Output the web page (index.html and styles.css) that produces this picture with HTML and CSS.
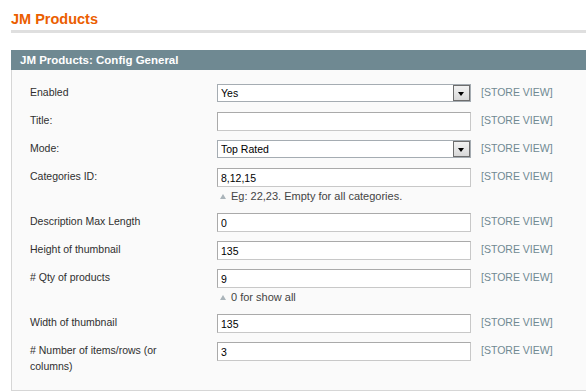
FILE: index.html
```html
<!DOCTYPE html>
<html lang="en">
<head>
  <meta charset="UTF-8">
  <title>JM Products</title>
  <link rel="stylesheet" href="styles.css">
</head>
<body>
  <div class="page">
    <div class="content-header">
      <h3>JM Products</h3>
    </div>

    <div class="section">
      <div class="section-head">JM Products: Config General</div>
      <div class="section-body">
        <div class="row">
          <label>Enabled</label>
          <div class="value">
            <div class="select">
              <select><option>Yes</option><option>No</option></select>
              <span class="arrow"></span>
            </div>
          </div>
          <div class="scope">[STORE VIEW]</div>
        </div>

        <div class="row">
          <label>Title:</label>
          <div class="value"><input type="text" value=""></div>
          <div class="scope">[STORE VIEW]</div>
        </div>

        <div class="row">
          <label>Mode:</label>
          <div class="value">
            <div class="select">
              <select><option>Top Rated</option><option>Latest</option></select>
              <span class="arrow"></span>
            </div>
          </div>
          <div class="scope">[STORE VIEW]</div>
        </div>

        <div class="row">
          <label>Categories ID:</label>
          <div class="value">
            <input type="text" value="8,12,15">
            <p class="note"><span class="tip"></span>Eg: 22,23. Empty for all categories.</p>
          </div>
          <div class="scope">[STORE VIEW]</div>
        </div>

        <div class="row">
          <label>Description Max Length</label>
          <div class="value"><input type="text" value="0"></div>
          <div class="scope">[STORE VIEW]</div>
        </div>

        <div class="row">
          <label>Height of thumbnail</label>
          <div class="value"><input type="text" value="135"></div>
          <div class="scope">[STORE VIEW]</div>
        </div>

        <div class="row">
          <label># Qty of products</label>
          <div class="value">
            <input type="text" value="9">
            <p class="note"><span class="tip"></span>0 for show all</p>
          </div>
          <div class="scope">[STORE VIEW]</div>
        </div>

        <div class="row">
          <label>Width of thumbnail</label>
          <div class="value"><input type="text" value="135"></div>
          <div class="scope">[STORE VIEW]</div>
        </div>

        <div class="row">
          <label># Number of items/rows (or columns)</label>
          <div class="value"><input type="text" value="3"></div>
          <div class="scope">[STORE VIEW]</div>
        </div>
      </div>
    </div>
  </div>
</body>
</html>
```

FILE: styles.css
```css
body {
  margin: 0;
  background: #fff;
  font-family: "Liberation Sans", Arial, sans-serif;
  color: #2f2f2f;
}
.page {
  padding: 10px 0 0 11px;
}
.content-header {
  border-bottom: 3px solid #dfdfdf;
  padding-bottom: 2px;
  margin-bottom: 17px;
}
.content-header h3 {
  margin: 0;
  font-size: 14.5px;
  line-height: 18px;
  font-weight: bold;
  color: #eb5e00;
}
.section-head {
  height: 20px;
  line-height: 20px;
  padding-left: 9px;
  background: #6f8992;
  color: #fff;
  font-size: 11.5px;
  font-weight: bold;
}
.section-body {
  background: #fafafa;
  border-left: 1px solid #d6d6d6;
  border-bottom: 1px solid #d6d6d6;
  padding: 9px 0 12px 18px;
}
.row {
  display: grid;
  grid-template-columns: 187px 264px auto;
  padding: 5px 0 4px;
}
.row label {
  max-width: 160px;
  font-size: 10.5px;
  line-height: 16px;
}
.value input {
  display: block;
  box-sizing: border-box;
  width: 254px;
  height: 19px;
  margin: 0;
  padding: 0 3px;
  border: 1px solid;
  border-color: #aaa #c8c8c8 #c8c8c8 #aaa;
  background: #fff;
  font-family: inherit;
  font-size: 10.5px;
  color: #000;
}
.select {
  position: relative;
  box-sizing: border-box;
  width: 254px;
  height: 18px;
  margin-bottom: 1px;
  border: 1px solid #a5acb2;
  background: #fff;
}
.select select {
  appearance: none;
  -webkit-appearance: none;
  display: block;
  width: 100%;
  height: 100%;
  margin: 0;
  padding: 0 3px;
  border: none;
  background: transparent;
  font-family: inherit;
  font-size: 10.5px;
  color: #000;
}
.select .arrow {
  position: absolute;
  top: 0;
  right: 0;
  box-sizing: border-box;
  width: 17px;
  height: 16px;
  border: 1px solid #6d6d6d;
  background: linear-gradient(#f2f2f2, #d8d8d8);
}
.select .arrow::after {
  content: "";
  position: absolute;
  left: 4px;
  top: 6px;
  border-left: 3.5px solid transparent;
  border-right: 3.5px solid transparent;
  border-top: 4px solid #000;
}
.note {
  margin: 2px 0 0;
  line-height: 15px;
  font-size: 11px;
  color: #444;
}
.tip {
  display: inline-block;
  margin: 0 5px 1px 3px;
  border-left: 3px solid transparent;
  border-right: 3px solid transparent;
  border-bottom: 5px solid #aab4ba;
}
.scope {
  font-size: 10.5px;
  line-height: 16px;
  color: #6f8992;
}
```
